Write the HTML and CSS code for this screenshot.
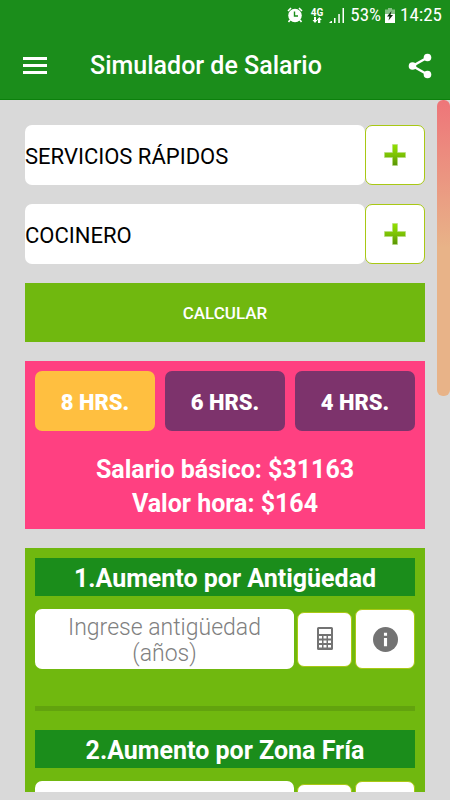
FILE: index.html
```html
<!DOCTYPE html>
<html lang="es">
<head>
<meta charset="utf-8">
<meta name="viewport" content="width=device-width, initial-scale=1">
<title>Simulador de Salario</title>
<link rel="stylesheet" href="styles.css">
</head>
<body>
<svg class="defs" aria-hidden="true">
  <defs>
    <linearGradient id="plus-fill" x1="0" y1="0" x2="0" y2="1">
      <stop offset="0" stop-color="#93e000"/>
      <stop offset="0.5" stop-color="#7cc204"/>
      <stop offset="1" stop-color="#599304"/>
    </linearGradient>
    <symbol id="plus" viewBox="0 0 24 24">
      <path d="M9.500 1.500h5v8h8v5h-8v8h-5v-8h-8v-5h8z" fill="url(#plus-fill)" stroke="#b5dc7c" stroke-width="0.600" stroke-linejoin="round"/>
    </symbol>
    <symbol id="calculator" viewBox="0 0 16 24">
      <path fill="#737373" fill-rule="evenodd" d="M1.500 0h13A1.500 1.500 0 0 1 16 1.500v20a1.500 1.500 0 0 1-1.500 1.500h-13A1.500 1.500 0 0 1 0 21.500v-20A1.500 1.500 0 0 1 1.500 0zM2 2v5h12V2zM2 9v2.500h3V9zM6.500 9v2.500h3V9zM11 9v2.500h3V9zM2 13.500V16h3v-2.500zM6.500 13.500V16h3v-2.500zM11 13.500V16h3v-2.500zM2 18v2.500h3V18zM6.500 18v2.500h3V18zM11 18v2.500h3V18z"/>
    </symbol>
    <symbol id="info" viewBox="0 0 24 24">
      <circle cx="12" cy="12" r="12" fill="#737373"/>
      <path d="M10.500 5.500h3v3h-3zM10.500 10.500h3v8h-3z" fill="#fff"/>
    </symbol>
  </defs>
</svg>

<header class="header">
  <div class="status">
    <svg class="status-alarm" viewBox="0 0 16 16" aria-label="Alarma">
      <circle cx="8" cy="8.500" r="6.800" fill="#fff"/>
      <path d="M1 4 4 1M15 4l-3-3M3 13l-1.500 2M13 13l1.500 2" stroke="#fff" stroke-width="1.600" fill="none"/>
      <path d="M7.500 4.500V9H11" stroke="#1b8d1b" stroke-width="1.400" fill="none"/>
    </svg>
    <div class="status-network">
      <span>4G</span>
      <svg viewBox="0 0 10 6" aria-hidden="true"><path d="M2 0h2v3h1.500L3 6 .5 3H2zM6 6V3H4.800L7.300 0l2.500 3H8.300v3z" fill="#fff"/></svg>
    </div>
    <svg class="status-signal" viewBox="0 0 16 15" aria-label="Señal">
      <path d="M0 15l2-2h1v2zM5 10h1.500v5H5zM9.300 6h1.500v9H9.300zM13.500 0H15v15h-1.500z" fill="#fff"/>
    </svg>
    <span class="status-text">53%</span>
    <svg class="status-battery" viewBox="0 0 10 15" aria-label="Batería cargando">
      <path d="M3 0h4v1.500h3V6H0V1.500h3z" fill="#84c084"/>
      <path d="M0 6h10v9H0z" fill="#fff"/>
      <path d="M6.500 3 2 8.500h2.500L3.500 12.500 8 7H5.500z" fill="#0b2b0b"/>
    </svg>
    <span class="status-text">14:25</span>
  </div>
  <div class="appbar">
    <button class="icon-button" type="button" aria-label="Menú">
      <svg class="menu-icon" viewBox="0 0 24 18"><path d="M0 0h24v3H0zM0 7h24v3H0zM0 14h24v3H0z" fill="#fff"/></svg>
    </button>
    <h1 class="title">Simulador de Salario</h1>
    <button class="icon-button" type="button" aria-label="Compartir">
      <svg class="share-icon" viewBox="0 0 24 26">
        <path d="M19.500 4.500 4.500 13l15 8.500" stroke="#fff" stroke-width="2.400" fill="none"/>
        <circle cx="19.500" cy="4.500" r="3.800" fill="#fff"/><circle cx="4.500" cy="13" r="3.800" fill="#fff"/><circle cx="19.500" cy="21.500" r="3.800" fill="#fff"/>
      </svg>
    </button>
  </div>
</header>

<main class="content">
  <div class="picker">
    <input class="field" type="text" value="SERVICIOS RÁPIDOS" aria-label="Rubro" readonly>
    <button class="tile tile-large" type="button" aria-label="Elegir rubro"><svg class="plus-icon"><use href="#plus"/></svg></button>
  </div>
  <div class="picker">
    <input class="field" type="text" value="COCINERO" aria-label="Puesto" readonly>
    <button class="tile tile-large" type="button" aria-label="Elegir puesto"><svg class="plus-icon"><use href="#plus"/></svg></button>
  </div>
  <button class="calculate" type="button">CALCULAR</button>

  <section class="salary">
    <div class="hours">
      <button class="hour hour-active" type="button">8 HRS.</button>
      <button class="hour" type="button">6 HRS.</button>
      <button class="hour" type="button">4 HRS.</button>
    </div>
    <p class="result">Salario básico: $31163<br>Valor hora: $164</p>
  </section>

  <div class="raises">
    <section class="raise">
      <h2 class="raise-title">1.Aumento por Antigüedad</h2>
      <div class="raise-row">
        <textarea class="raise-input" rows="2" placeholder="Ingrese antigüedad (años)" aria-label="Antigüedad en años"></textarea>
        <button class="tile tile-small" type="button" aria-label="Calcular antigüedad"><svg class="calculator-icon"><use href="#calculator"/></svg></button>
        <button class="tile tile-large" type="button" aria-label="Información de antigüedad"><svg class="info-icon"><use href="#info"/></svg></button>
      </div>
    </section>
    <hr class="divider">
    <section class="raise">
      <h2 class="raise-title">2.Aumento por Zona Fría</h2>
      <div class="raise-row">
        <textarea class="raise-input" rows="2" aria-label="Zona fría"></textarea>
        <button class="tile tile-small" type="button" aria-label="Calcular zona fría"><svg class="calculator-icon"><use href="#calculator"/></svg></button>
        <button class="tile tile-large" type="button" aria-label="Información de zona fría"><svg class="info-icon"><use href="#info"/></svg></button>
      </div>
    </section>
  </div>
  <div class="scroll-thumb"></div>
</main>
</body>
</html>
```
FILE: styles.css
```css
* {
  box-sizing: border-box;
}

body {
  margin: 0;
  height: 100vh;
  display: flex;
  flex-direction: column;
  background: #d9d9d9;
  font-family: Roboto, "Liberation Sans", sans-serif;
}

button,
input,
textarea {
  font-family: inherit;
  border: 0;
  padding: 0;
}

svg {
  display: block;
}

.defs {
  position: absolute;
  width: 0;
  height: 0;
}

.header {
  flex: none;
  background: #1b8d1b;
  border-bottom: 1px solid #0c800c;
  color: #fff;
}

.status {
  display: flex;
  align-items: center;
  justify-content: flex-end;
  height: 30px;
  padding-right: 8px;
}

.status-alarm {
  width: 16px;
  height: 16px;
  margin-right: 8px;
}

.status-network {
  display: flex;
  flex-direction: column;
  align-items: center;
  margin-right: 6px;
  font-size: 10px;
  font-weight: 700;
  line-height: 9px;
}

.status-network svg {
  width: 10px;
  height: 6px;
}

.status-signal {
  width: 16px;
  height: 15px;
  margin-right: 5px;
}

.status-battery {
  width: 10px;
  height: 15px;
  margin: 0 5px 0 4px;
}

.status-text {
  font-family: "Roboto Condensed", Roboto, sans-serif;
  font-size: 19px;
  line-height: 30px;
}

.appbar {
  display: flex;
  align-items: center;
  height: 69px;
  padding: 2px 10px 0 15px;
}

.icon-button {
  display: flex;
  align-items: center;
  justify-content: center;
  width: 40px;
  height: 48px;
  background: none;
}

.menu-icon {
  width: 24px;
  height: 18px;
}

.share-icon {
  width: 24px;
  height: 26px;
}

.title {
  flex: 1;
  margin: 0 0 0 35px;
  font-size: 25px;
  font-weight: 500;
  line-height: 32px;
}

.content {
  position: relative;
  flex: 1;
  min-height: 0;
  display: flex;
  flex-direction: column;
  gap: 19px;
  padding: 25px 25px 8px;
}

.picker {
  display: flex;
}

.field {
  flex: 1;
  min-width: 0;
  height: 60px;
  padding-top: 2px;
  border-radius: 7px;
  background: #fff;
  color: #000;
  font-size: 22px;
}

.tile {
  flex: none;
  display: flex;
  align-items: center;
  justify-content: center;
  background: #fff;
  border: 1px solid #a8c814;
  border-radius: 7px;
}

.tile-large {
  width: 60px;
  height: 60px;
}

.tile-small {
  width: 55px;
  height: 55px;
}

.plus-icon {
  width: 24px;
  height: 24px;
}

.calculator-icon {
  width: 16px;
  height: 24px;
}

.info-icon {
  width: 25px;
  height: 25px;
}

.calculate {
  flex: none;
  height: 59px;
  background: #70b80f;
  color: #fff;
  font-size: 17px;
  font-weight: 500;
}

.salary {
  padding: 10px 10px 8px;
  background: #ff4081;
}

.hours {
  display: grid;
  grid-template-columns: repeat(3, 1fr);
  gap: 10px;
}

.hour {
  height: 60px;
  padding-top: 2px;
  border-radius: 7px;
  background: #7d336c;
  color: #fff;
  font-size: 22px;
  font-weight: 900;
}

.hour-active {
  background: #ffbf40;
}

.result {
  margin: 22px 0 0;
  color: #fff;
  font-size: 25px;
  font-weight: 700;
  line-height: 34px;
  text-align: center;
}

.raises {
  flex: 1;
  min-height: 0;
  overflow: hidden;
  padding: 10px 10px 0;
  background: #70b80f;
}

.raise-title {
  margin: 0;
  background: #1b8d1b;
  color: #fff;
  font-size: 25px;
  font-weight: 700;
  line-height: 38px;
  height: 38px;
  padding-top: 2px;
  text-align: center;
}

.raise-row {
  display: flex;
  align-items: center;
  gap: 3px;
  margin-top: 13px;
}

.raise-input {
  flex: 1;
  min-width: 0;
  height: 60px;
  padding: 6px 10px 2px;
  border-radius: 7px;
  background: #fff;
  font-size: 23px;
  font-weight: 300;
  line-height: 26px;
  text-align: center;
  resize: none;
  overflow: hidden;
}

.raise-input::placeholder {
  color: #808080;
}

.divider {
  height: 5px;
  margin: 37px 0 19px;
  border: 0;
  background: #62a30e;
}

.scroll-thumb {
  position: absolute;
  top: 0;
  right: 0;
  width: 13px;
  height: 296px;
  border-radius: 6px;
  background: linear-gradient(#ee7579, #e8b388 50%, #e8b388);
}
```
